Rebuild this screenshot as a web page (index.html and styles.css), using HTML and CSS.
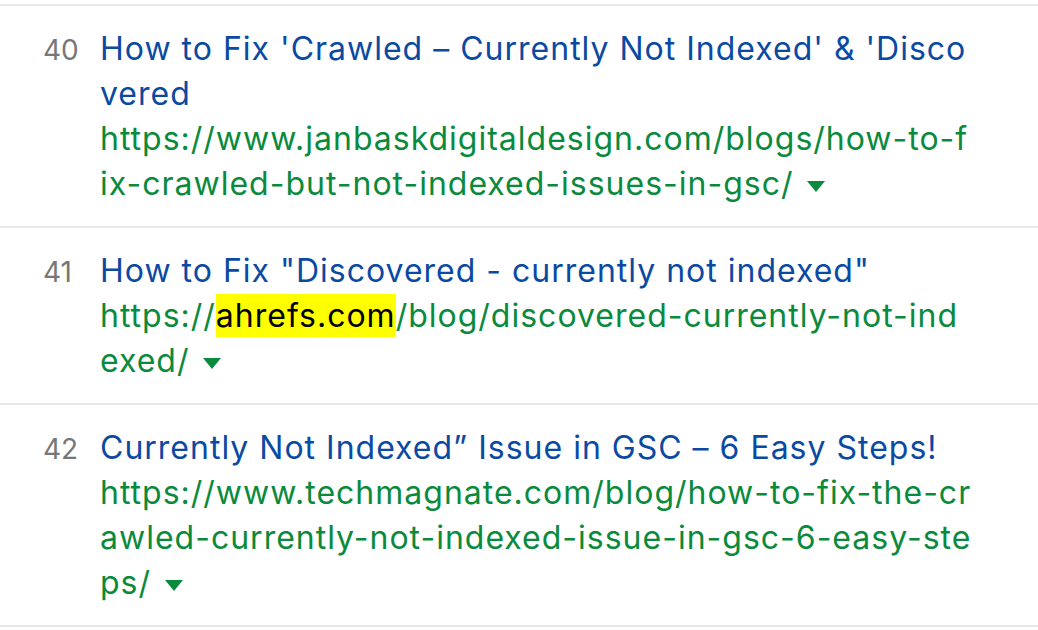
FILE: index.html
```html
<!DOCTYPE html>
<html lang="en">
<head>
    <meta charset="UTF-8">
    <meta name="viewport" content="width=device-width, initial-scale=1.0">
    <title>Search results</title>
    <link rel="stylesheet" href="styles.css">
</head>
<body>

<ol class="results">
    <!-- 40 -->
    <li class="result">
        <span class="rank">40</span>
        <div class="entry">
            <a class="title" href="#">How to Fix 'Crawled – Currently Not Indexed' &amp; 'Discovered</a>
            <div class="url">https://www.janbaskdigitaldesign.com/blogs/how-to-fix-crawled-but-not-indexed-issues-in-gsc/ <span class="caret"></span></div>
        </div>
    </li>

    <!-- 41 -->
    <li class="result">
        <span class="rank">41</span>
        <div class="entry">
            <a class="title" href="#">How to Fix "Discovered - currently not indexed"</a>
            <div class="url">https://<mark>ahrefs.com</mark>/blog/discovered-currently-not-indexed/ <span class="caret"></span></div>
        </div>
    </li>

    <!-- 42 -->
    <li class="result">
        <span class="rank">42</span>
        <div class="entry">
            <a class="title" href="#">Currently Not Indexed” Issue in GSC – 6 Easy Steps!</a>
            <div class="url">https://www.techmagnate.com/blog/how-to-fix-the-crawled-currently-not-indexed-issue-in-gsc-6-easy-steps/ <span class="caret"></span></div>
        </div>
    </li>
</ol>

</body>
</html>
```

FILE: styles.css
```css
body {
    margin: 0;
    padding: 0;
    background-color: #fff;
    font-family: Inter, "Noto Sans", sans-serif;
}
.results {
    list-style: none;
    margin: 4px 0 0;
    padding: 0;
}
.result {
    display: flex;
    align-items: baseline;
    padding: 20px 66px 20px 43px;
    border-top: 2px solid #e8e8e8;
}
.result:last-child {
    border-bottom: 2px solid #e8e8e8;
}
.rank {
    flex: 0 0 57px;
    font-size: 28px;
    color: #777;
}
.entry {
    flex: 1;
    min-width: 0;
    font-size: 32px;
    line-height: 45px;
    letter-spacing: 1px;
    word-break: break-all;
}
.title {
    display: block;
    color: #0b4aa2;
    text-decoration: none;
}
.url {
    color: #0a8a3c;
}
.url mark {
    background-color: #ffff00;
    color: #000;
    padding: 2px 0;
}
.caret {
    display: inline-block;
    width: 0;
    height: 0;
    margin-left: 4px;
    vertical-align: middle;
    border-left: 9px solid transparent;
    border-right: 9px solid transparent;
    border-top: 11px solid #0a8a3c;
}
```
